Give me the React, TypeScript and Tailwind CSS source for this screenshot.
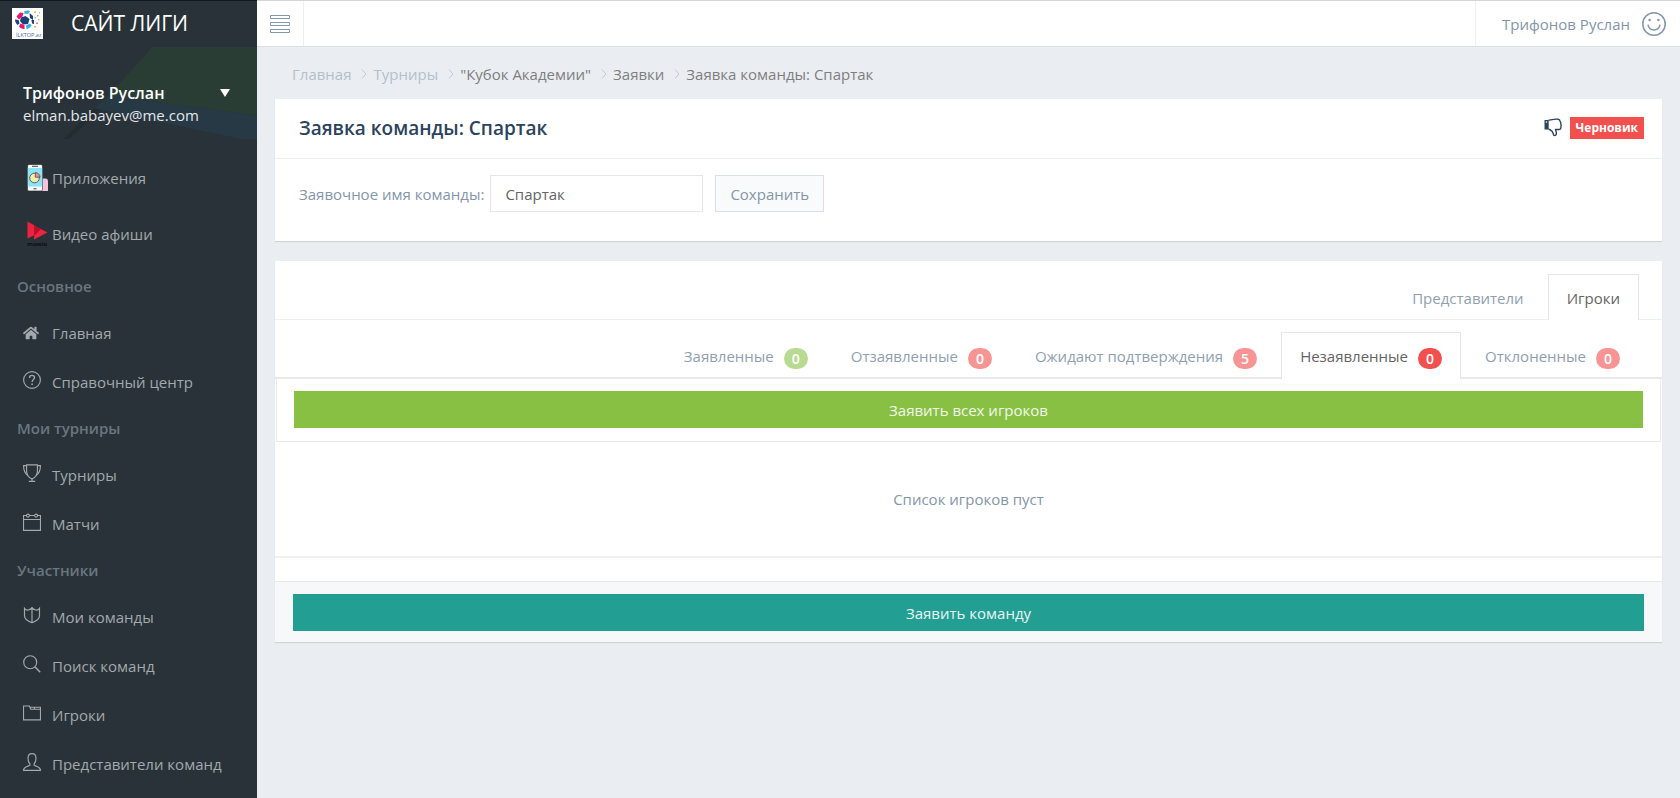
import { useState } from 'react'
import type { ReactNode } from 'react'
import { FaHome } from 'react-icons/fa'

function LineIcon({ children, className = 'mb-1 size-[18px]' }: { children: ReactNode; className?: string }) {
  return (
    <svg viewBox="0 0 18 18" fill="none" stroke="currentColor" strokeWidth="1.15" className={`${className} shrink-0`} aria-hidden="true">
      {children}
    </svg>
  )
}

const icons = {
  question: (
    <LineIcon>
      <circle cx="9" cy="9" r="8.4" />
      <path d="M6.5 6.9C6.5 5.3 7.5 4.4 9 4.4s2.5.9 2.5 2.2c0 1.9-2.4 2-2.4 4.3" strokeWidth="1.3" />
      <circle cx="9.1" cy="13.2" r=".9" fill="currentColor" stroke="none" />
    </LineIcon>
  ),
  trophy: (
    <LineIcon>
      <path d="M3.6.8h10.8v6.400c0 4.200-2.600 6.400-5.400 7.800-2.800-1.400-5.400-3.600-5.400-7.800z" />
      <path d="M3.5 1.600H.6c-.1 4.700 1.400 8 4.300 9.800M14.500 1.600h2.900c.1 4.700-1.400 8-4.300 9.800M9 15v2.300M5.800 17.400h6.400" />
    </LineIcon>
  ),
  calendar: (
    <LineIcon>
      <path d="M3.300 2.500H.5v14.800h17V2.500h-2.800M6.400 2.500h5.200M.5 6.500h17" />
      <circle cx="4.900" cy="2.600" r="1.500" />
      <circle cx="13.100" cy="2.600" r="1.500" />
    </LineIcon>
  ),
  shield: (
    <LineIcon>
      <path d="M1.500 2.300c1.100 1.600 3.200 2 4.600 1.400C7.300 3.200 8.300 2.800 9 2c.7.800 1.700 1.200 2.900 1.700 1.400.6 3.500.2 4.600-1.400v7.400c0 3.200-3.600 5.600-7.500 7.100-3.900-1.500-7.500-3.900-7.500-7.100zM9 2v14.800" />
      <circle cx="9" cy="2.400" r="1.200" fill="currentColor" stroke="none" />
    </LineIcon>
  ),
  search: (
    <LineIcon>
      <circle cx="7.200" cy="7.200" r="6.500" />
      <path d="M11.800 11.800l5.400 5.400" strokeWidth="1.500" />
    </LineIcon>
  ),
  folder: (
    <LineIcon>
      <path d="M.5 2h6l1.200 3.200h9.800v10.600H.5zM7 3.200h10.500v2M11.500 3.200v2" />
    </LineIcon>
  ),
  user: (
    <LineIcon>
      <path d="M6.900 10.800C5.500 9.400 5 7.600 5 5.200 5 2.500 6.600.6 9 .6s4 1.900 4 4.600c0 2.400-.5 4.200-1.900 5.600v1.500c1.900.9 6.400 1.500 6.400 5.100H.5c0-3.600 4.500-4.200 6.400-5.100z" />
    </LineIcon>
  ),
}

const menu = [
  {
    title: 'Основное',
    items: [
      { label: 'Главная', icon: <FaHome className="size-4 shrink-0" /> },
      { label: 'Справочный центр', icon: icons.question },
    ],
  },
  {
    title: 'Мои турниры',
    items: [
      { label: 'Турниры', icon: icons.trophy },
      { label: 'Матчи', icon: icons.calendar },
    ],
  },
  {
    title: 'Участники',
    items: [
      { label: 'Мои команды', icon: icons.shield },
      { label: 'Поиск команд', icon: icons.search },
      { label: 'Игроки', icon: icons.folder },
      { label: 'Представители команд', icon: icons.user },
    ],
  },
]

const playerTabs = [
  { label: 'Заявленные', count: 0, color: 'bg-[#8bc34a]' },
  { label: 'Отзаявленные', count: 0, color: 'bg-[#f2504f]' },
  { label: 'Ожидают подтверждения', count: 5, color: 'bg-[#f2504f]' },
  { label: 'Незаявленные', count: 0, color: 'bg-[#f2504f]' },
  { label: 'Отклоненные', count: 0, color: 'bg-[#f2504f]' },
]

const crumbs = [
  { label: 'Главная', link: true },
  { label: 'Турниры', link: true },
  { label: '"Кубок Академии"', link: false },
  { label: 'Заявки', link: false },
  { label: 'Заявка команды: Спартак', link: false },
]

function Logo() {
  return (
    <svg viewBox="0 0 31 31" className="size-[31px] shrink-0" aria-hidden="true">
      <rect width="31" height="31" fill="#fff" />
      <path d="M9 9.500l4.500-1.500 4 3-1.500 5-5 .5-3-3.500z" fill="#1d3f7c" />
      <path d="M4.500 8.500l3.500-4 3.500.5-1 3.500-3.500 3z" fill="#e3196f" />
      <path d="M12.500 3c2.500-1 4.500-.5 5.500.5l-2 2.500-4-.5z" fill="#33b4e5" />
      <path d="M17.500 5l3.500 3v4l-3-2z" fill="#1d3f7c" />
      <path d="M3 11.500l3.500.5 1 3.500-2 1.500c-1.500-1.500-2.500-3.500-2.500-5.500z" fill="#1d3f7c" />
      <path d="M7 18.500l1.500-3 4 1.500v4c-2.500.2-4.500-1-5.500-2.500z" fill="#e3196f" />
      <path d="M14 17.500l4-2 1.500 2c-1 2-3 3.500-5 3.500z" fill="#33b4e5" />
      <path d="M19.500 12h2.500v4l-2-.5z" fill="#1d3f7c" />
      <path d="M22 3.500h2V5h-2zM26 11h1.500v1.500H26zM22 18h2v1.500h-2z" fill="#f7b82f" />
      <path d="M25 7h1.500v1.500H25zM24 14.500h2V16h-2z" fill="#ee7aa8" />
      <path d="M22.500 9h1.500v1.500h-1.500zM27 4h1v1.500h-1z" fill="#7fcdea" />
      <text x="4" y="28.500" fontSize="5.500" fontFamily="Open Sans, sans-serif" fill="#47699c">İLKTOP.az</text>
    </svg>
  )
}

function PhoneIcon() {
  return (
    <svg viewBox="0 0 22 28" className="h-7 w-[22px]" aria-hidden="true">
      <path d="M14 14.500h5q2 0 2 2.500v10h-7z" fill="#f3c3dc" />
      <rect x=".5" y=".5" width="15" height="26.500" rx="1.500" fill="#f5f7f8" stroke="#1d2529" strokeWidth=".6" />
      <rect x=".8" y="4" width="14.400" height="18.500" fill="#8ce5f5" />
      <path d="M5 2.300h6M6.500 24.800h3" stroke="#444" strokeWidth="1" />
      <circle cx="7.500" cy="14" r="4.800" fill="#f5ebaa" stroke="#3b4448" strokeWidth=".8" />
      <path d="M8.300 13.200V8.600a4.800 4.800 0 0 1 4.800 4.600z" fill="#f08a92" stroke="#3b4448" strokeWidth=".7" />
    </svg>
  )
}

function MowioIcon() {
  return (
    <svg viewBox="0 0 22 28" className="h-7 w-[22px]" aria-hidden="true">
      <path d="M.5 1.500l7 4v9.500L.5 18.500z" fill="#ef2340" />
      <path d="M7 5.500l13.500 7L7 19.500z" fill="#ef2340" />
      <path d="M7 5.500l7 3.600-7 7z" fill="#b80f2d" />
      <text x="0" y="26" fontSize="6" fontWeight="700" fontFamily="Open Sans, sans-serif" fill="#0c1012">mowio</text>
    </svg>
  )
}

function ThumbsDown() {
  return (
    <svg viewBox="0 0 18 19" className="h-[19px] w-[18px]" fill="none" aria-hidden="true">
      <path d="M.5 2h4.200v9.500H.5z" fill="currentColor" />
      <circle cx="2.500" cy="4" r=".8" fill="#fff" />
      <path d="M4.500 2.200C8 1.600 11 .8 14.200 1.200c1.600.2 1.900 1.200 1.900 2.300.7.600.9 1.500.6 2.400.6.9.6 1.700.2 2.600.3 1.700-.5 3-2 3h-3.400c.3 1.300 1.200 2.800.8 4.700-.3 1.300-1.900 1.700-2.600.8-.7-1-.6-2.500-1.500-3.500C7.100 12.400 6.300 11.300 4.500 11.200" stroke="currentColor" strokeWidth="1.400" strokeLinejoin="round" />
    </svg>
  )
}

function Sidebar() {
  return (
    <aside className="w-[257px] shrink-0 bg-[#283238] text-[#a3a9ad]">
      <div className="flex h-[47px] items-center gap-7 border-t border-[#10181c] pb-0.5 pl-3 text-white">
        <Logo />
        <span className="text-[21px] leading-7 font-medium">САЙТ ЛИГИ</span>
      </div>

      <div className="relative h-[103px] px-[23px] pt-8">
        <svg viewBox="0 0 256 104" preserveAspectRatio="none" className="absolute inset-0 h-full w-full" aria-hidden="true">
          <path d="M152 0h104v69L108 49z" fill="#2a3d34" />
          <path d="M108 49l148 20v24h-16L94 62z" fill="#263945" />
          <path d="M94 62l-31 31h6l32-30z" fill="#232c31" />
        </svg>
        <div className="relative">
          <button className="flex w-full items-center justify-between pr-1 text-base leading-7 font-semibold text-white">
            Трифонов Руслан
            <svg viewBox="0 0 10 8" className="h-2 w-2.5" fill="currentColor" aria-hidden="true">
              <path d="M0 0h10L5 8z" />
            </svg>
          </button>
          <p className="text-[15px] leading-4 text-[#e3e6e8]">elman.babayev@me.com</p>
        </div>
      </div>

      <nav className="text-[15px]">
        <div className="pb-0.5">
          <a href="#" className="flex h-14 items-center gap-[3px] pl-[27px]">
            <PhoneIcon />
            Приложения
          </a>
          <a href="#" className="flex h-14 items-center gap-[3px] pl-[27px]">
            <MowioIcon />
            Видео афиши
          </a>
        </div>
        {menu.map((section) => (
          <div key={section.title}>
            <h3 className="flex h-11 items-center pl-[17px] font-semibold text-[#6a7680]">{section.title}</h3>
            {section.items.map((item) => (
              <a key={item.label} href="#" className="flex h-[49px] items-center pl-[23px]">
                <span className="w-[29px]">{item.icon}</span>
                {item.label}
              </a>
            ))}
          </div>
        ))}
      </nav>
    </aside>
  )
}

function Header() {
  return (
    <header className="flex h-[47px] items-stretch justify-between border-t border-b border-t-[#d5d5d5] border-b-[#dcdfe2] bg-white text-[#8496a9]">
      <button className="flex w-[47px] items-center justify-center border-r border-[#eeeff1]" aria-label="Меню">
        <svg viewBox="0 0 20 18" className="h-[18px] w-5" fill="none" stroke="currentColor" aria-hidden="true">
          <path d="M.5.500h19v3H.5zM.5 7.500h19v3H.5zM.5 14.500h19v3H.5z" />
        </svg>
      </button>
      <a href="#" className="flex items-center gap-3 border-l border-[#eeeff1] pr-3.5 pl-[26px]">
        Трифонов Руслан
        <LineIcon className="size-6">
          <circle cx="9" cy="9" r="8.400" />
          <circle cx="5.700" cy="6" r=".9" fill="currentColor" stroke="none" />
          <circle cx="12.300" cy="6" r=".9" fill="currentColor" stroke="none" />
          <path d="M4.500 9.500c.5 2.600 2.300 4 4.500 4s4-1.400 4.500-4" />
        </LineIcon>
      </a>
    </header>
  )
}

export default function App() {
  const [teamName, setTeamName] = useState('Спартак')
  const [activeTab, setActiveTab] = useState('Незаявленные')

  return (
    <div className="flex min-h-screen bg-[#eaeef3] font-['Open_Sans',sans-serif] text-[15px] leading-5">
      <Sidebar />

      <div className="min-w-0 flex-1">
        <Header />

        <main className="px-[18px]">
          <nav className="flex h-[52px] items-center pt-0.5 pl-[17px]">
            {crumbs.map((crumb, i) => (
              <span key={crumb.label} className="flex items-center">
                {i > 0 && (
                  <svg viewBox="0 0 6 10" className="mr-1.5 ml-2.5 h-2.5 w-1.5" fill="none" stroke="#c3cad2" aria-hidden="true">
                    <path d="M1 .5L5 5 1 9.500" />
                  </svg>
                )}
                {crumb.link ? (
                  <a href="#" className="text-[#b4bfca]">{crumb.label}</a>
                ) : (
                  <span className="text-[#7e7e7e]">{crumb.label}</span>
                )}
              </span>
            ))}
          </nav>

          {/* Team card */}
          <section className="bg-white shadow-[0_1px_1px_#cfd3d7]">
            <div className="flex h-[60px] items-center justify-between border-b border-[#eeeff0] pr-[18px] pb-0.5 pl-6 text-[#2c435b]">
              <h1 className="text-[19px] font-semibold">Заявка команды: Спартак</h1>
              <div className="flex items-center gap-2">
                <ThumbsDown />
                <span className="bg-[#f2504f] px-1.5 py-px text-xs leading-5 font-bold text-white">Черновик</span>
              </div>
            </div>
            <form className="flex items-center px-6 pt-4 pb-[29px] text-[#8496a9]" onSubmit={(e) => e.preventDefault()}>
              <label htmlFor="team-name">Заявочное имя команды:</label>
              <input
                id="team-name"
                value={teamName}
                onChange={(e) => setTeamName(e.target.value)}
                className="mr-3 ml-1.5 h-[37px] w-[213px] border border-[#e6e6e6] px-3.5 text-[#646464] outline-none"
              />
              <button className="h-[37px] border border-[#d8dfe5] bg-[#f9fafb] px-3.5">Сохранить</button>
            </form>
          </section>

          {/* Players card */}
          <section className="mt-5 bg-white text-[#8fa0b1] shadow-[0_1px_1px_#cfd3d7]">
            <div className="flex h-[59px] items-end justify-end gap-[5px] border-b border-[#eeeff0] pr-[23px]">
              <button className="-mb-px h-[46px] border border-b-0 border-transparent px-[18px]">Представители</button>
              <button className="-mb-px h-[46px] border border-b-0 border-[#e6e6e6] bg-white px-[18px] text-[#646464]">Игроки</button>
            </div>

            <div className="flex h-[59px] items-end justify-end gap-[5px] border-b-2 border-[#e9e9e9] pr-[23px]">
              {playerTabs.map((tab) => {
                const active = tab.label === activeTab
                return (
                  <button
                    key={tab.label}
                    onClick={() => setActiveTab(tab.label)}
                    className={`-mb-0.5 flex h-[47px] items-center gap-2.5 border border-b-0 px-[18px] ${
                      active ? 'border-[#e6e6e6] bg-white text-[#646464]' : 'border-transparent'
                    }`}
                  >
                    {tab.label}
                    <span
                      className={`mt-1 w-6 rounded-full text-center text-sm leading-[21px] font-semibold text-white ${tab.color} ${
                        active ? '' : 'opacity-60'
                      }`}
                    >
                      {tab.count}
                    </span>
                  </button>
                )
              })}
            </div>

            <div className="mx-px border-x border-b border-[#e9e9e9] px-[17px] pt-3 pb-[13px]">
              <button className="h-[37px] w-full bg-[#87c043] text-[#f2f8ea]">Заявить всех игроков</button>
            </div>

            <p className="flex h-[116px] items-center justify-center border-b-2 border-[#f0f0f0] text-[#8496a9]">
              Список игроков пуст
            </p>

            <div className="mt-[23px] border-t border-[#e6e8ea] bg-[#f6f8f9] px-[18px] pt-3 pb-[11px]">
              <button className="h-[37px] w-full bg-[#239e93] text-[#e9f5f4]">Заявить команду</button>
            </div>
          </section>
        </main>
      </div>
    </div>
  )
}
